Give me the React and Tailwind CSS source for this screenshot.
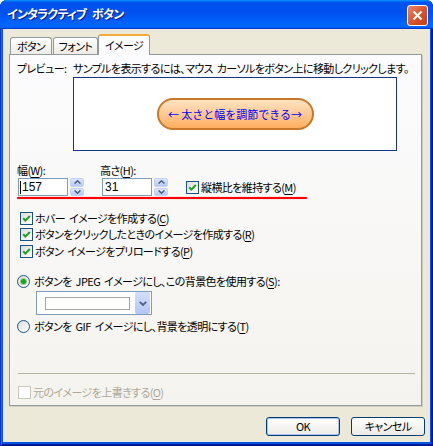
import React from 'react';

// --- small XP-style controls ---
function Check({ checked = true, disabled = false }) {
    return (
        <span className={`flex h-[13px] w-[13px] shrink-0 items-center justify-center border ${disabled ? 'border-[#CAC8BB] bg-white' : 'border-[#1C5180] bg-linear-to-br from-[#DCDCD7] to-white'}`}>
            {checked && (
                <svg width="11" height="11" viewBox="0 0 11 11">
                    <path d="M2.2 5.2 L4.4 7.6 L8.8 3" fill="none" stroke="#21A121" strokeWidth="2" />
                </svg>
            )}
        </span>
    );
}

function Radio({ checked = false }) {
    return (
        <span className="flex h-[13px] w-[13px] shrink-0 items-center justify-center rounded-full border border-[#1C5180] bg-linear-to-br from-[#DCDCD7] to-white">
            {checked && <span className="h-[5px] w-[5px] rounded-full bg-[#21A121] shadow-[0_0_0_1px_#8ED08E]" />}
        </span>
    );
}

function Spin() {
    return (
        <div className="ml-[2px] flex h-[18px] w-[14px] flex-col gap-px">
            {['up', 'down'].map((d) => (
                <div key={d} className="flex flex-1 items-center justify-center rounded-[2px] border border-[#C3D3F8] bg-linear-to-b from-[#DCE6FC] to-[#B6C9F6]">
                    <svg width="7" height="4" viewBox="0 0 7 4">
                        <path d={d === 'up' ? 'M0.6 3.6 L3.5 0.8 L6.4 3.6' : 'M0.6 0.4 L3.5 3.2 L6.4 0.4'} fill="none" stroke="#4D6185" strokeWidth="1.5" />
                    </svg>
                </div>
            ))}
        </div>
    );
}

function XPButton({ children, isDefault }) {
    return (
        <button className={`flex h-[19px] w-[74px] items-center justify-center rounded-[3px] border border-[#003C74] bg-linear-to-b from-white to-[#ECEBE6] text-[11px] leading-none text-black ${isDefault ? 'shadow-[inset_0_0_0_1px_#A9C2EF]' : ''}`}>
            {children}
        </button>
    );
}

function Row({ children, className = '' }) {
    return <div className={`flex h-[13px] items-center gap-[2px] leading-[13px] whitespace-nowrap ${className}`}>{children}</div>;
}

export default function App() {
    return (
        <div className="flex h-[446px] w-[433px] flex-col overflow-hidden rounded-t-[7px] bg-[#0855DD] font-['Noto_Sans_CJK_JP',sans-serif] text-[11px] tracking-[-0.6px] [word-spacing:2px] text-black [font-feature-settings:'palt'] shadow-[inset_1px_1px_#0831D9,inset_-1px_-1px_#00138C,inset_2px_0_#166AEE,inset_-2px_-2px_#001EA0]">

            {/* --- Title bar --- */}
            <div className="flex h-[29px] shrink-0 items-start justify-between bg-[linear-gradient(180deg,#0997FF,#0053EE_8%,#0050EE_40%,#0066FF_88%,#0066FF_93%,#005BFF_95%,#003DD7_96%,#003DD7)] pl-[7px] pr-[5px]">
                <span className="mt-[6px] text-[12px] font-bold leading-[16px] tracking-[-0.8px] [word-spacing:4px] text-white [text-shadow:1px_1px_#0A1883]">インタラクティブ ボタン</span>
                <div className="mt-[5px] flex h-[21px] w-[21px] items-center justify-center rounded-[3px] border border-white bg-linear-to-br from-[#E9876A] via-[#D9562F] to-[#C23C18]">
                    <svg width="11" height="11" viewBox="0 0 11 11">
                        <path d="M1.5 1.5 L9.5 9.5 M9.5 1.5 L1.5 9.5" stroke="white" strokeWidth="2" />
                    </svg>
                </div>
            </div>

            {/* --- Dialog body --- */}
            <div className="mx-[3px] mb-[4px] flex flex-1 flex-col bg-[#ECE9D8]">

                {/* Tabs */}
                <div className="flex h-[25px] items-end pl-[7px]">
                    <div className="flex h-[17px] w-[42px] items-center justify-center rounded-t-[3px] border border-b-0 border-[#919B9C] bg-linear-to-b from-white to-[#ECEBE6]">ボタン</div>
                    <div className="ml-px flex h-[17px] w-[45px] items-center justify-center rounded-t-[3px] border border-b-0 border-[#919B9C] bg-linear-to-b from-white to-[#ECEBE6]">フォント</div>
                    <div className="relative z-10 -mb-px flex h-[21px] w-[52px] items-center justify-center rounded-t-[3px] border-x border-t-[2px] border-[#919B9C] border-t-[#F3AC3C] bg-[#FCFCFE] pb-[1px]">イメージ</div>
                </div>

                {/* Panel */}
                <div className="ml-[6px] flex h-[352px] w-[413px] flex-col border border-[#919B9C] bg-linear-to-b from-[#FCFCFE] to-[#F4F3EE] pl-[7px] pt-[6px] shadow-[1px_1px_0_#D0CEBF]">

                    {/* Preview */}
                    <div className="flex">
                        <span className="w-[56px] shrink-0 whitespace-nowrap leading-[14px]">プレビュー:</span>
                        <div className="flex flex-col">
                            <span className="whitespace-nowrap leading-[14px]">サンプルを表示するには、マウス カーソルをボタン上に移動しクリックします。</span>
                            <div className="mt-[2px] flex h-[74px] w-[324px] items-center justify-center border border-[#17338C] bg-white">
                                <div className="flex h-[32px] w-[157px] items-center justify-center whitespace-nowrap rounded-full border-2 border-[#C8782B] bg-linear-to-b from-[#FFE3C2] to-[#FFAE5E] text-[11px] tracking-normal [word-spacing:0] text-[#0000FF] [font-feature-settings:normal]">
                                    ← 太さと幅を調節できる→
                                </div>
                            </div>
                        </div>
                    </div>

                    {/* Size labels */}
                    <div className="mt-[12px] flex leading-[14px]">
                        <span className="w-[83px]">幅(<u className="underline-offset-2">W</u>):</span>
                        <span>高さ(<u className="underline-offset-2">H</u>):</span>
                    </div>

                    {/* Size inputs */}
                    <div className="mt-px flex h-[18px] items-center">
                        <div className="ml-px flex h-[18px] w-[50px] items-center border border-[#7F9DB9] bg-white pl-[1px] font-['Liberation_Sans',sans-serif] text-[12px] tracking-normal">
                            <span className="mr-[1px] h-[13px] w-px bg-black" />
                            157
                        </div>
                        <Spin />
                        <div className="ml-[18px] flex h-[18px] w-[50px] items-center border border-[#7F9DB9] bg-white pl-[2px] font-['Liberation_Sans',sans-serif] text-[12px] tracking-normal">
                            31
                        </div>
                        <Spin />
                        <div className="ml-[18px] flex items-center gap-[2px]">
                            <Check />
                            <span className="whitespace-nowrap">縦横比を維持する(<u className="underline-offset-2">M</u>)</span>
                        </div>
                    </div>

                    {/* Annotation */}
                    <div className="mt-px h-[2px] w-[290px] rounded-full bg-[#FF0000] shadow-[0_0_1px_#FF5050]" />

                    {/* Image options */}
                    <Row className="ml-[3px] mt-[13px]"><Check /><span>ホバー イメージを作成する(<u className="underline-offset-2">C</u>)</span></Row>
                    <Row className="ml-[3px] mt-[3px]"><Check /><span>ボタンをクリックしたときのイメージを作成する(<u className="underline-offset-2">R</u>)</span></Row>
                    <Row className="ml-[3px] mt-[4px]"><Check /><span>ボタン イメージをプリロードする(<u className="underline-offset-2">P</u>)</span></Row>

                    <Row className="mt-[17px] gap-[4px]"><Radio checked /><span>ボタンを JPEG イメージにし、この背景色を使用する(<u className="underline-offset-2">S</u>):</span></Row>

                    <div className="ml-[19px] mt-[3px] flex h-[24px] w-[116px] items-center border border-[#7F9DB9] bg-white pl-[8px] pr-px">
                        <div className="h-[13px] w-[85px] border border-[#A7A69A] bg-white" />
                        <div className="ml-auto flex h-[22px] w-[15px] items-center justify-center rounded-[2px] bg-linear-to-b from-[#D2DEFC] to-[#B2C6F7]">
                            <svg width="8" height="5" viewBox="0 0 8 5">
                                <path d="M0.8 0.8 L4 4 L7.2 0.8" fill="none" stroke="#4D6185" strokeWidth="1.8" />
                            </svg>
                        </div>
                    </div>

                    <Row className="mt-[5px] gap-[4px]"><Radio /><span>ボタンを GIF イメージにし、背景を透明にする(<u className="underline-offset-2">T</u>)</span></Row>

                    <div className="ml-px mt-[40px] h-px w-[397px] bg-[#B5B2A4]" />

                    <Row className="ml-px mt-[12px]"><Check checked={false} disabled /><span className="text-[#ACA899]">元のイメージを上書きする(<u className="underline-offset-2">O</u>)</span></Row>
                </div>

                {/* Buttons */}
                <div className="mt-[11px] flex justify-end gap-[11px] pr-[5px]">
                    <XPButton isDefault>OK</XPButton>
                    <XPButton>キャンセル</XPButton>
                </div>
            </div>
        </div>
    );
}
